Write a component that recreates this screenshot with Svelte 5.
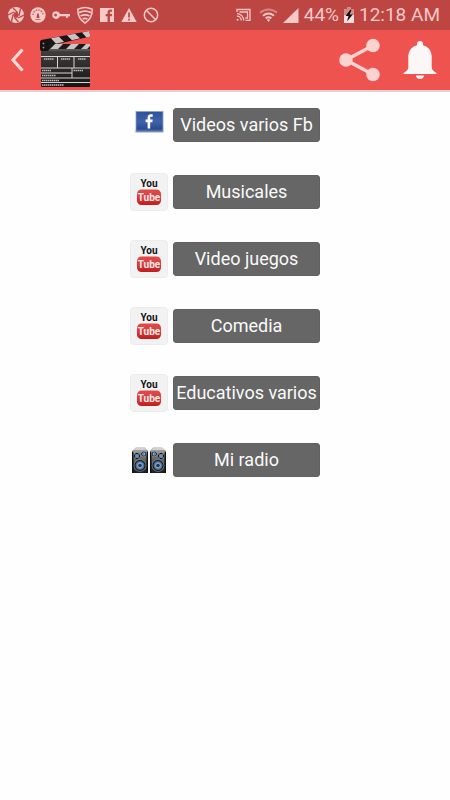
<script>
  const categories = [
    { label: 'Videos varios Fb', icon: 'facebook' },
    { label: 'Musicales', icon: 'youtube' },
    { label: 'Video juegos', icon: 'youtube' },
    { label: 'Comedia', icon: 'youtube' },
    { label: 'Educativos varios', icon: 'youtube' },
    { label: 'Mi radio', icon: 'speakers' }
  ];
</script>

{#snippet facebook()}
  <svg width="38" height="38" viewBox="0 0 38 38" aria-hidden="true">
    <defs>
      <linearGradient id="fb" x1="0" y1="0" x2="0" y2="1">
        <stop offset="0" stop-color="#2f529a" />
        <stop offset="0.5" stop-color="#3f62a8" />
        <stop offset="0.85" stop-color="#2b4b90" />
        <stop offset="1" stop-color="#6d87ba" />
      </linearGradient>
    </defs>
    <rect x="4.5" y="24" width="29" height="2.5" fill="#dfe4ee" />
    <rect x="6" y="5.5" width="27" height="20.5" fill="url(#fb)" stroke="#8c9fc8" stroke-width="0.8" />
    <path d="M17.6 22.500v-6.300h-2v-2.800h2v-1.700c0-2.400 1.300-3.500 3.300-3.500.9 0 1.500.1 1.800.1v2.500h-1.200c-1 0-1.300.5-1.300 1.200v1.400h2.500l-.4 2.800h-2.100v6.300z" fill="#fff" />
  </svg>
{/snippet}

{#snippet youtube()}
  <svg width="38" height="38" viewBox="0 0 38 38" aria-hidden="true">
    <defs>
      <linearGradient id="yt" x1="0" y1="0" x2="0" y2="1">
        <stop offset="0" stop-color="#e04a48" />
        <stop offset="0.45" stop-color="#d8403f" />
        <stop offset="1" stop-color="#c01c1e" />
      </linearGradient>
    </defs>
    <rect x="0.5" y="0.5" width="37" height="37" rx="3" fill="#f2f2f2" stroke="#ececec" />
    <text class="yt" x="19" y="14" text-anchor="middle" fill="#111">You</text>
    <rect x="7" y="16.5" width="24" height="15.500" rx="4.500" fill="url(#yt)" />
    <text class="yt" x="19" y="28" text-anchor="middle" fill="#fbeaea">Tube</text>
  </svg>
{/snippet}

{#snippet speakers()}
  <svg width="38" height="38" viewBox="0 0 38 38" aria-hidden="true">
    <defs>
      <linearGradient id="case" x1="0" y1="0" x2="0" y2="1">
        <stop offset="0" stop-color="#b5b2b0" />
        <stop offset="0.35" stop-color="#77736f" />
        <stop offset="1" stop-color="#1d1b1b" />
      </linearGradient>
      <radialGradient id="cone">
        <stop offset="0" stop-color="#1c2733" />
        <stop offset="0.3" stop-color="#8fb2d4" />
        <stop offset="0.65" stop-color="#3f6590" />
        <stop offset="0.8" stop-color="#10151c" />
        <stop offset="1" stop-color="#8c9298" />
      </radialGradient>
      <g id="speaker">
        <path d="M1 10 5 6.500h9l3 3.500V32H1z" fill="url(#case)" />
        <path d="M2.500 9 5 6.500h8.500l2 2.500z" fill="#d2d0ce" />
        <path d="M1 10v22h1.500V12zM17 10v22h-1.500V12z" fill="#111" />
        <circle cx="6" cy="15" r="3.200" fill="url(#cone)" />
        <circle cx="12.700" cy="13" r="2.700" fill="url(#cone)" />
        <circle cx="9" cy="24.500" r="6.200" fill="url(#cone)" />
        <circle cx="9" cy="24.500" r="1.800" fill="#26384d" />
      </g>
    </defs>
    <use href="#speaker" x="1" />
    <use href="#speaker" transform="translate(37 0) scale(-1 1)" />
  </svg>
{/snippet}

<div class="screen">
  <div class="status">
    <div class="notices">
      <svg width="16" height="16" viewBox="0 0 16 16" aria-hidden="true">
        <circle cx="8" cy="8" r="8" fill="#f7c9c7" />
        <path d="M5 1 9.500 5.500M12.500 1.500 11 8.500M16 8 10 11M10.500 15 6.500 10.500M3.500 14.500 5 7.500M0 8 6 5" stroke="#bd4542" stroke-width="1.300" />
        <path d="M6.500 5.300h3L11 8l-1.500 2.700h-3L5 8z" fill="#bd4542" />
      </svg>
      <svg width="16" height="16" viewBox="0 0 16 16" aria-hidden="true">
        <circle cx="8" cy="8" r="7.700" fill="#f7c9c7" />
        <path d="M3 8a5 5 0 0 1 10 0" fill="none" stroke="#cf6f6c" stroke-width="1.600" stroke-dasharray="1.600 1" />
        <path d="M7.300 6.500h1.400l.8 4.500h-3z" fill="#bd4542" />
        <path d="M5.500 12.500h5" stroke="#cf6f6c" />
      </svg>
      <svg width="18" height="16" viewBox="0 0 18 16" aria-hidden="true">
        <path d="M4.200 4.200a3.900 3.900 0 1 0 3.700 5.100h6v1.500h2.300V9.300H18V7H7.900a3.900 3.900 0 0 0-3.700-2.800zm-.6 2.500a1.400 1.400 0 1 1 0 2.800 1.400 1.400 0 0 1 0-2.800z" fill="#f7c9c7" fill-rule="evenodd" />
      </svg>
      <svg width="18" height="18" viewBox="0 0 18 18" fill="none" stroke="#f7c9c7" stroke-width="1.500" aria-hidden="true">
        <path d="M9 1.500c2.500 0 4.500.6 7.200 1.800.2 5.400-2 10.500-7.200 13.700C3.800 13.800 1.600 8.700 1.800 3.300 4.500 2.100 6.500 1.500 9 1.500z" />
        <path d="M3 6.600c4-2 8-2 12 0M4.500 10c3-1.500 6-1.500 9 0M6.600 13c1.600-.8 3.200-.8 4.800 0" stroke-width="1.800" />
      </svg>
      <svg width="15" height="16" viewBox="0 0 15 16" aria-hidden="true">
        <rect y="1" width="14" height="14" fill="#f7c9c7" />
        <path d="M7.500 15V9.300H5.700V7.100h1.800V5.500c0-2 1.200-3 3-3h1.600v2.200H11c-.9 0-1.100.4-1.100 1.100v1.300h2.200l-.3 2.200H9.900V15z" fill="#bd4542" />
      </svg>
      <svg width="16" height="16" viewBox="0 0 16 16" aria-hidden="true">
        <path d="M8 1 15.700 15H.3z" fill="#f7c9c7" />
        <path d="M8 5.500v5M8 11.800v1.700" stroke="#bd4542" stroke-width="1.700" />
      </svg>
      <svg width="16" height="16" viewBox="0 0 16 16" fill="none" stroke="#f7c9c7" stroke-width="1.500" aria-hidden="true">
        <circle cx="8" cy="8" r="6.700" />
        <path d="M3.300 3.300l9.400 9.400" />
      </svg>
    </div>
    <div class="system">
      <svg width="15" height="14" viewBox="0 0 15 14" fill="none" stroke="#f7c9c7" stroke-width="1.300" aria-hidden="true">
        <path d="M1 4V1.500h13v10.800H9.500M1 5.700a6.700 6.700 0 0 1 6.700 6.700M1 8.200a4.200 4.200 0 0 1 4.200 4.200M3.500 4h8v6H9.300" />
        <circle cx="1.600" cy="11.800" r="1" fill="#f7c9c7" stroke="none" />
      </svg>
      <svg class="wifi" width="19" height="14" viewBox="0 0 19 14" fill="none" stroke-width="2" aria-hidden="true">
        <path d="M1 4.800c5-4.400 12-4.400 17 0" stroke="#d98682" />
        <path d="M4 7.700c3.500-2.800 7.500-2.800 11 0" stroke="#f7c9c7" />
        <path d="M6.600 10.300c1.900-1.400 3.900-1.400 5.800 0" stroke="#f7c9c7" />
        <path d="M9.500 14 7.700 11.800q1.800-1 3.600 0z" fill="#f7c9c7" />
      </svg>
      <svg width="16" height="15" viewBox="0 0 16 15" aria-hidden="true">
        <path d="M15.500 0v15H0z" fill="#f7c9c7" />
      </svg>
      <span>44%</span>
      <svg width="10" height="16" viewBox="0 0 10 16" aria-hidden="true">
        <path d="M3 0h4v2h3v6H0V2h3z" fill="#d58c89" />
        <path d="M0 8h10v8H0z" fill="#fbdedd" />
        <path d="M6.500 2.500 1.500 9h3L3 14.500 8.800 7.500H5.500L7.500 3z" fill="#111" />
      </svg>
      <span>12:18 AM</span>
    </div>
  </div>

  <header>
    <button class="plain" aria-label="Atrás">
      <svg width="16" height="24" viewBox="0 0 16 24" aria-hidden="true">
        <path d="M12.500 1.500 3 12l9.500 10.500" fill="none" stroke="#fdd9d7" stroke-width="3.200" />
      </svg>
    </button>
    <svg class="clapper" width="52" height="58" viewBox="0 0 52 58" aria-hidden="true">
      <defs>
        <linearGradient id="slate" x1="0" y1="0" x2="0" y2="1">
          <stop offset="0" stop-color="#4a4747" />
          <stop offset="0.4" stop-color="#333131" />
          <stop offset="1" stop-color="#161414" />
        </linearGradient>
      </defs>
      <path d="M1 9 49 0l1.500 5.500L4 16z" fill="#1b1717" />
      <path d="M11 7.200 19 5.700l5 5-8 2zM27 4.200l8-1.500 5 4.600-8 2zM42 1.400 49 0l1.500 5.500-4 1z" fill="#c9c4c3" />
      <rect x="1" y="13" width="49" height="43" rx="1" fill="url(#slate)" />
      <path d="M9 13h41v5H9z" fill="#1b1919" />
      <path d="M15 13h8l-5 5h-8zM31 13h8l-5 5h-8zM46 13h4v2l-3 3h-6z" fill="#c9c4c3" />
      <path d="M9 19h41" stroke="#8f8b89" stroke-width="0.600" />
      <rect x="0" y="9" width="9" height="11" rx="2" fill="#151212" />
      <circle cx="3.500" cy="12.500" r="1" fill="#8c8583" />
      <circle cx="3.500" cy="16.500" r="1" fill="#8c8583" />
      <path d="M1 25.500h49M1 37h49M1 42h31M1 47h49M1 51.500h49M17.500 25.500V37M34 25.500V37M32 37v10" stroke="#d8d4d2" stroke-width="1" fill="none" />
      <path d="M4 28h10M21 28h9M38 28h8M2 39.500h9M33.500 39.500h10M2 44.500h14M2 49.500h17M2 54h22" stroke="#c2bdbc" stroke-width="1.500" stroke-dasharray="1.500 .5" />
    </svg>
    <button class="plain share" aria-label="Compartir">
      <svg width="42" height="44" viewBox="0 0 42 44" aria-hidden="true">
        <path d="M34 7.500 7 22l27 14.500" fill="none" stroke="#fcd3d1" stroke-width="3.500" />
        <circle cx="7" cy="22" r="6.800" fill="#fcd3d1" />
        <circle cx="34" cy="7.500" r="6.800" fill="#fcd3d1" />
        <circle cx="34" cy="36.500" r="6.800" fill="#fcd3d1" />
      </svg>
    </button>
    <button class="plain" aria-label="Notificaciones">
      <svg width="34" height="38" viewBox="0 0 34 38" aria-hidden="true">
        <path d="M17 0c1.800 0 3 1.300 3 3v1.200c5.400 1.300 8.700 5.800 8.700 11.500V26c0 3 2 4.500 4.800 6v1H.5v-1c2.800-1.500 4.800-3 4.800-6V15.700C5.300 10 8.600 5.500 14 4.200V3c0-1.700 1.200-3 3-3zM13 34.500h8c0 2-1.800 3.500-4 3.500s-4-1.500-4-3.500z" fill="#fbf7f7" />
      </svg>
    </button>
  </header>

  <main>
    <ul>
      {#each categories as item}
        <li>
          {#if item.icon === 'facebook'}
            {@render facebook()}
          {:else if item.icon === 'youtube'}
            {@render youtube()}
          {:else}
            {@render speakers()}
          {/if}
          <button class="category">{item.label}</button>
        </li>
      {/each}
    </ul>
  </main>
</div>

<style>
  :global(body) {
    margin: 0;
    background: #fefefe;
  }

  .screen {
    font-family: Roboto, 'Liberation Sans', sans-serif;
  }

  svg {
    display: block;
    flex: none;
  }

  .status {
    display: flex;
    justify-content: space-between;
    align-items: center;
    height: 30px;
    padding: 0 10px 0 8px;
    background: #bd4542;
    color: #f7c9c7;
    font-size: 19px;
    line-height: 30px;
    white-space: nowrap;
  }

  .notices,
  .system {
    display: flex;
    align-items: center;
  }

  .notices {
    gap: 6px;
  }

  .system {
    gap: 5px;
  }

  .wifi {
    margin-left: 3px;
  }

  header {
    display: flex;
    align-items: center;
    height: 60px;
    padding: 0 13px 0 10px;
    background: #ef5350;
    border-bottom: 2px solid #e6cfce;
  }

  .plain {
    padding: 0;
    border: 0;
    background: none;
  }

  .clapper {
    margin-left: 14px;
  }

  .share {
    margin: 0 22px 0 auto;
  }

  main {
    display: flex;
    justify-content: center;
    padding: 14px 0;
  }

  ul {
    display: flex;
    flex-direction: column;
    gap: 29px;
    margin: 0;
    padding: 0;
    list-style: none;
  }

  li {
    display: flex;
    align-items: center;
    gap: 5px;
  }

  .category {
    width: 147px;
    height: 34px;
    padding: 0;
    border: 1px solid #616161;
    border-radius: 3px;
    background: #666;
    color: #fafafa;
    font-family: inherit;
    font-size: 18px;
    line-height: 32px;
    white-space: nowrap;
  }

  .yt {
    font-size: 10px;
    font-weight: bold;
  }
</style>
